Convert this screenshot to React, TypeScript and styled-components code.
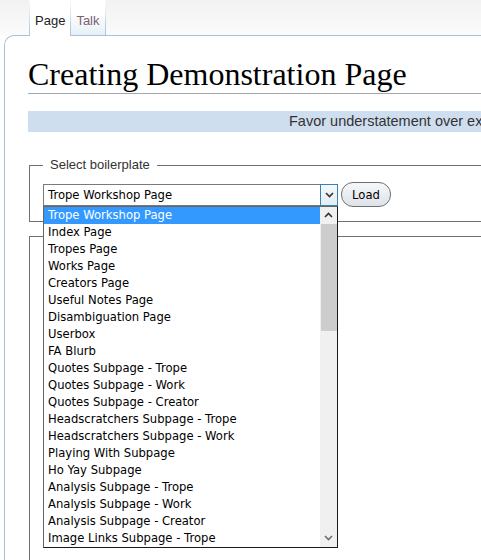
import styled, { createGlobalStyle } from "styled-components";

const GlobalStyle = createGlobalStyle`
  html, body {
    margin: 0;
    padding: 0;
    background: #ffffff;
    overflow: hidden;
  }
`;

const SEP = "linear-gradient(to bottom, rgba(167, 193, 217, 0), #a7c1d9)";
const LIST_FONT = `"DejaVu Sans", Verdana, sans-serif`;

const Page = styled.div`
    width: 481px;
    height: 560px;
    overflow: hidden;
    background: #ffffff;
`;

const Header = styled.div`
    display: flex;
    height: 35px;
    padding-left: 29px;
    background: linear-gradient(to bottom, #f2f2f2, #fbfbfb);
    position: relative;
    z-index: 1;
`;

const Tab = styled.a<{ $active?: boolean }>`
    display: flex;
    align-items: flex-end;
    box-sizing: border-box;
    height: ${(p) => (p.$active ? "36px" : "35px")};
    padding: 0 5px ${(p) => (p.$active ? "8px" : "7px")};
    font: 13px "Liberation Sans", Arial, sans-serif;
    color: ${(p) => (p.$active ? "#222222" : "#7d5f72")};
    background: ${(p) =>
        p.$active ? "#ffffff" : "linear-gradient(to bottom, #ffffff 40%, #e6eff7)"};
    border-style: solid;
    border-width: 0 0 0 1px;
    border-image: ${SEP} 1;
    text-decoration: none;
    cursor: pointer;

    &:last-child {
        border-right-width: 1px;
    }
`;

const Panel = styled.div`
    margin-left: 4px;
    width: 1000px;
    height: 600px;
    box-sizing: border-box;
    padding-left: 23px;
    border-left: 1px solid #a7c1d9;
    border-top: 1px solid #a7c1d9;
    border-top-left-radius: 10px;
    background: #ffffff;
`;

const Heading = styled.h1`
    margin: 20px 0 0;
    font: 400 32px/37px "Liberation Serif", "Times New Roman", serif;
    color: #000000;
    border-bottom: 1px solid #a2a9b1;
`;

const Banner = styled.div`
    margin-top: 17px;
    height: 21px;
    padding-left: 261px;
    background: #cfdeef;
    font: 14.5px/21px "Liberation Sans", Arial, sans-serif;
    color: #333333;
    white-space: nowrap;
`;

const Fieldset = styled.fieldset<{ $tall?: boolean }>`
    margin: ${(p) => (p.$tall ? "14px" : "25px")} 0 0 1px;
    padding: 9px 0 14px 13px;
    height: ${(p) => (p.$tall ? "400px" : "auto")};
    border: 1px solid #707070;
    min-width: 0;
`;

const Legend = styled.legend`
    padding: 0 7px;
    font: 13px/16px "Liberation Sans", Arial, sans-serif;
    color: #333333;
`;

const Row = styled.div`
    display: flex;
    align-items: center;
    gap: 3px;
    height: 25px;
`;

const SelectBox = styled.div`
    position: relative;
    display: flex;
    box-sizing: border-box;
    width: 295px;
    height: 22px;
    border: 1px solid #7a7a7a;
    background: #ffffff;
`;

const SelectValue = styled.div`
    flex: 1;
    padding-left: 4px;
    font: 11.6px/20px ${LIST_FONT};
    color: #000000;
    white-space: nowrap;
`;

const ArrowButton = styled.div`
    display: flex;
    align-items: center;
    justify-content: center;
    box-sizing: border-box;
    width: 18px;
    margin: -1px -1px -1px 0;
    border: 1px solid #3c7fb1;
    background: linear-gradient(to bottom, #f4f8fb, #e3edf5);
`;

const List = styled.div`
    position: absolute;
    top: calc(100% + 1px);
    left: -1px;
    z-index: 10;
    display: flex;
    box-sizing: border-box;
    width: 295px;
    border: 1px solid #646464;
    border-right-color: #1a1a1a;
    border-bottom-color: #1a1a1a;
    background: #ffffff;
`;

const Items = styled.div`
    flex: 1;
`;

const Item = styled.div<{ $selected?: boolean }>`
    height: 17px;
    padding-left: 4px;
    font: 11.6px/17px ${LIST_FONT};
    color: ${(p) => (p.$selected ? "#ffffff" : "#000000")};
    background: ${(p) => (p.$selected ? "#3399ff" : "transparent")};
    white-space: nowrap;
`;

const Scrollbar = styled.div`
    display: flex;
    flex-direction: column;
    width: 17px;
    background: #f0f0f0;
`;

const ScrollButton = styled.div`
    display: flex;
    align-items: center;
    justify-content: center;
    height: 17px;
`;

const Thumb = styled.div`
    height: 107px;
    margin-left: 1px;
    background: #cdcdcd;
`;

const Track = styled.div`
    flex: 1;
`;

const LoadButton = styled.button`
    box-sizing: border-box;
    width: 50px;
    height: 25px;
    padding: 0;
    border: 1px solid #707070;
    border-radius: 12px;
    background: linear-gradient(to bottom, #f6f7f9, #dde3ea);
    font: 11.6px ${LIST_FONT};
    color: #000000;
    cursor: pointer;
`;

const Chevron = ({ up, color }: { up?: boolean; color: string }) => (
    <svg width="9" height="6" viewBox="0 0 9 6">
        <path
            d={up ? "M1 5 L4.5 1.5 L8 5" : "M1 1 L4.5 4.5 L8 1"}
            fill="none"
            stroke={color}
            strokeWidth="1.6"
        />
    </svg>
);

const options = [
    "Trope Workshop Page",
    "Index Page",
    "Tropes Page",
    "Works Page",
    "Creators Page",
    "Useful Notes Page",
    "Disambiguation Page",
    "Userbox",
    "FA Blurb",
    "Quotes Subpage - Trope",
    "Quotes Subpage - Work",
    "Quotes Subpage - Creator",
    "Headscratchers Subpage - Trope",
    "Headscratchers Subpage - Work",
    "Playing With Subpage",
    "Ho Yay Subpage",
    "Analysis Subpage - Trope",
    "Analysis Subpage - Work",
    "Analysis Subpage - Creator",
    "Image Links Subpage - Trope",
];

export default function App() {
    return (
        <Page>
            <GlobalStyle />
            <Header>
                <Tab $active>Page</Tab>
                <Tab>Talk</Tab>
            </Header>
            <Panel>
                <Heading>Creating Demonstration Page</Heading>
                <Banner>Favor understatement over exaggeration</Banner>
                <Fieldset>
                    <Legend>Select boilerplate</Legend>
                    <Row>
                        <SelectBox>
                            <SelectValue>{options[0]}</SelectValue>
                            <ArrowButton>
                                <Chevron color="#333333" />
                            </ArrowButton>
                            <List>
                                <Items>
                                    {options.map((o, i) => (
                                        <Item key={o} $selected={i === 0}>
                                            {o}
                                        </Item>
                                    ))}
                                </Items>
                                <Scrollbar>
                                    <ScrollButton>
                                        <Chevron up color="#333333" />
                                    </ScrollButton>
                                    <Thumb />
                                    <Track />
                                    <ScrollButton>
                                        <Chevron color="#707070" />
                                    </ScrollButton>
                                </Scrollbar>
                            </List>
                        </SelectBox>
                        <LoadButton>Load</LoadButton>
                    </Row>
                </Fieldset>
                <Fieldset $tall />
            </Panel>
        </Page>
    );
}
